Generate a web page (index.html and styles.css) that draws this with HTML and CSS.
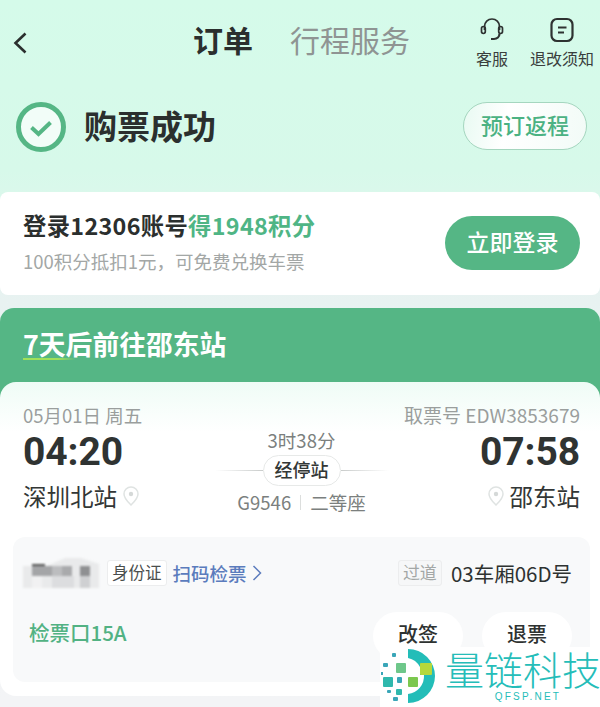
FILE: index.html
```html
<!DOCTYPE html>
<html lang="zh-CN">
<head>
<meta charset="utf-8">
<title>订单</title>
<link rel="stylesheet" href="styles.css">
</head>
<body>
<div class="page">
  <header class="nav">
    <svg class="back" width="16" height="24" viewBox="0 0 16 24"><path d="M13.5 2.5 3.5 12l10 9.5" fill="none" stroke="#2b2f2e" stroke-width="2.6"/></svg>
    <div class="tabs"><span class="tab-on">订单</span><span class="tab-off">行程服务</span></div>
    <div class="tools">
      <div class="tool tool-a">
        <svg width="24" height="24" viewBox="0 0 24 24" fill="none" stroke="#2e3231" stroke-width="1.7"><path d="M4.500 12V8.500a7.500 7.500 0 0 1 15 0V12"/><rect x="1.500" y="8.500" width="3.800" height="7" rx="1.900"/><rect x="18.700" y="8.500" width="3.800" height="7" rx="1.900"/><path d="M19.500 15.500c0 3.500-2.500 5.500-5.500 5.500h-3" stroke-width="2.200"/></svg>
        <span>客服</span>
      </div>
      <div class="tool tool-b">
        <svg width="24" height="26" viewBox="0 0 24 26" fill="none" stroke="#2e3231"><rect x="1.500" y="2" width="21" height="22" rx="5.500" stroke-width="2.200"/><path d="M8 10.500h8.500M8 15.500h6" stroke-width="2"/></svg>
        <span>退改须知</span>
      </div>
    </div>
  </header>

  <section class="status">
    <div class="status-main">
      <svg width="50" height="50" viewBox="0 0 50 50"><circle cx="25" cy="25" r="22.500" fill="#f2fdf8" stroke="#55b685" stroke-width="5"/><path d="M15.500 25.500l7 6.500 12-11.500" fill="none" stroke="#55b685" stroke-width="4"/></svg>
      <h1>购票成功</h1>
    </div>
    <div class="return-btn">预订返程</div>
  </section>

  <section class="login">
    <div>
      <div class="login-title">登录12306账号<em>得1948积分</em></div>
      <div class="login-sub">100积分抵扣1元，可免费兑换车票</div>
    </div>
    <div class="login-btn">立即登录</div>
  </section>

  <section class="trip">
    <div class="trip-head"><span>7天后前往邵东站</span></div>
    <div class="ticket">
      <div class="route">
        <div class="end">
          <div class="meta">05月01日 周五</div>
          <div class="time">04:20</div>
          <div class="station">深圳北站
            <svg class="pin" width="16" height="20" viewBox="0 0 16 20"><path d="M8 1a7 7 0 0 0-7 7c0 4.500 4.500 8.500 7 11 2.500-2.500 7-6.500 7-11a7 7 0 0 0-7-7z" fill="#fff" stroke="#dfe3e2" stroke-width="1.500"/><circle cx="8" cy="8" r="2.200" fill="#d5d9d8"/></svg>
          </div>
        </div>
        <div class="mid">
          <div class="duration">3时38分</div>
          <div class="stops"><i class="line line-l"></i><span class="pill">经停站</span><i class="line line-r"></i></div>
          <div class="train"><span>G9546</span><i class="bar"></i><span>二等座</span></div>
        </div>
        <div class="end end-right">
          <div class="meta">取票号 EDW3853679</div>
          <div class="time">07:58</div>
          <div class="station">
            <svg class="pin" width="16" height="20" viewBox="0 0 16 20"><path d="M8 1a7 7 0 0 0-7 7c0 4.500 4.500 8.500 7 11 2.500-2.500 7-6.500 7-11a7 7 0 0 0-7-7z" fill="#fff" stroke="#dfe3e2" stroke-width="1.500"/><circle cx="8" cy="8" r="2.200" fill="#d5d9d8"/></svg>
            邵东站</div>
        </div>
      </div>

      <div class="panel">
        <div class="row row-top">
          <div class="who">
            <svg class="mosaic" width="76" height="30" viewBox="0 0 76 30">
              <path d="M0 8h24l18-8h16l18 6v24H0z" fill="#e9eaeb"/>
              <rect x="9" y="6" width="13" height="2" fill="#555"/>
              <rect x="9" y="8" width="20" height="10" fill="#a4a5a7"/>
              <rect x="29" y="8" width="10" height="10" fill="#bcbdbf"/>
              <rect x="39" y="8" width="10" height="10" fill="#a9aaac"/>
              <rect x="57" y="8" width="10" height="10" fill="#8f9092"/>
              <rect x="29" y="18" width="22" height="12" fill="#dcdddf"/>
              <rect x="57" y="18" width="10" height="12" fill="#cfd0d2"/>
              <rect x="9" y="18" width="10" height="12" fill="#f1f1f2"/>
            </svg>
            <span class="tag">身份证</span>
            <span class="scan">扫码检票</span>
            <svg class="chev" width="10" height="18" viewBox="0 0 10 18"><path d="M1.500 2l7 7-7 7" fill="none" stroke="#5b7cbd" stroke-width="1.500"/></svg>
          </div>
          <div class="seat"><span class="tag tag-light">过道</span><span>03车厢06D号</span></div>
        </div>
        <div class="row row-bottom">
          <div class="gate">检票口15A</div>
          <div class="actions"><div class="action">改签</div><div class="action">退票</div></div>
        </div>
      </div>
    </div>
  </section>

  <div class="mark">
    <svg width="56" height="60" viewBox="0 0 56 60">
      <path d="M28 2a27 27 0 0 1 0 54v-9a18 18 0 0 0 16-19h-4v-8a18 18 0 0 0-12-9z" fill="#23bdb8"/>
      <rect x="12" y="6" width="4" height="4" rx="1" fill="#3aa6b8"/>
      <rect x="3" y="16" width="5" height="4" rx="1" fill="#3aa6b8"/>
      <rect x="1" y="25" width="2" height="3" fill="#3aa6b8"/>
      <rect x="16" y="16" width="10" height="10" rx="1" fill="#6ec78a"/>
      <rect x="40" y="16" width="12" height="12" rx="1" fill="#b4d83c"/>
      <rect x="3" y="30" width="10" height="10" rx="1" fill="#2fb8ad"/>
      <rect x="17" y="30" width="5" height="6" rx="1" fill="#3aa6b8"/>
      <rect x="28" y="30" width="10" height="10" rx="1" fill="#7bc84f"/>
      <rect x="7" y="43" width="4" height="3" rx="1" fill="#3aa6b8"/>
      <rect x="16" y="42" width="6" height="6" rx="1" fill="#2fb8ad"/>
      <rect x="13" y="50" width="5" height="4" rx="1" fill="#3aa6b8"/>
    </svg>
    <div class="mark-text">
      <div class="mark-name">量链科技</div>
      <div class="mark-url">QFSP.NET</div>
    </div>
  </div>
</div>
</body>
</html>
```

FILE: styles.css
```css
* { box-sizing: border-box; }
html, body { margin: 0; padding: 0; }
body {
  font-family: "Noto Sans CJK SC", "Noto Sans", sans-serif;
  color: #2e3231;
}
.page {
  position: relative;
  width: 600px;
  height: 707px;
  overflow: hidden;
  background: linear-gradient(#d5fbea 0, #d7f9ea 170px, #e8f2f1 300px, #f3f4f6 700px);
}
.nav {
  position: relative;
  height: 83px;
  padding: 0 6px 0 12px;
  display: flex;
  align-items: flex-start;
}
.back { margin-top: 31px; }
.tabs {
  margin: 17px 0 0 165px;
  display: flex;
  gap: 37px;
  font-size: 30px;
  line-height: 44px;
}
.tab-on { font-weight: 700; color: #2b2f2e; }
.tab-off { color: #8f9493; }
.tools {
  margin-left: auto;
  display: flex;
  gap: 22px;
  padding-top: 17px;
}
.tool {
  display: flex;
  flex-direction: column;
  align-items: center;
  font-size: 16px;
  line-height: 20px;
  color: #3a3e3d;
}
.tool svg { display: block; height: 26px; }
.tool span { margin-top: 5px; }
.status {
  height: 109px;
  padding: 19px 13px 0 16px;
  display: flex;
  justify-content: space-between;
  align-items: flex-start;
}
.status-main { display: flex; align-items: flex-start; gap: 18px; }
.status-main svg { display: block; }
h1 {
  margin: -2px 0 0;
  font-size: 33px;
  line-height: 50px;
  font-weight: 700;
  color: #2b2f2e;
}
.return-btn {
  width: 124px;
  height: 48px;
  padding-bottom: 5px;
  border: 1px solid #a5d6bf;
  border-radius: 24px;
  background: linear-gradient(100deg, #e8faf2, #ffffff 35%, #f2fbf7);
  color: #4bb283;
  font-size: 22px;
  font-weight: 500;
  display: flex;
  align-items: center;
  justify-content: center;
}
.login {
  height: 103px;
  background: #fff;
  border-radius: 8px;
  padding: 16px 20px 0 23px;
  display: flex;
  justify-content: space-between;
  align-items: flex-start;
}
.login-title {
  font-size: 23.300px;
  line-height: 34px;
  font-weight: 700;
  letter-spacing: 0.35px;
  color: #2b2f2e;
}
.login-title em { font-style: normal; color: #4fb585; }
.login-sub {
  margin-top: 7px;
  font-size: 18.500px;
  line-height: 24px;
  color: #a3a7a6;
}
.login-btn {
  margin-top: 8px;
  width: 135px;
  height: 54px;
  padding-bottom: 5px;
  border-radius: 27px;
  background: #55b685;
  color: #fff;
  font-size: 23px;
  font-weight: 500;
  display: flex;
  align-items: center;
  justify-content: center;
}
.trip {
  margin-top: 13px;
  background: linear-gradient(#55b685 0, #55b685 100px, transparent 100px);
  border-radius: 14px 14px 0 0;
}
.trip-head {
  height: 74px;
  padding: 15px 0 0 23px;
  color: #fff;
  font-size: 26.800px;
  line-height: 42px;
  font-weight: 700;
}
.trip-head span {
  display: inline-block;
  background: linear-gradient(90deg, #9fe05a, #9fe05a 50%, transparent 75%) no-repeat 0 35px / 70px 2px;
}
.ticket {
  height: 314px;
  padding: 21px 10px 14px 13px;
  background: linear-gradient(#effcf6 0, #ffffff 50px);
  border-radius: 16px;
}
.route {
  height: 134px;
  display: flex;
  justify-content: space-between;
  padding: 0 10px;
}
.end { width: 190px; }
.end-right { text-align: right; }
.meta {
  font-size: 18.500px;
  line-height: 24px;
  color: #9a9e9d;
}
.end-right .meta { font-size: 19px; }
.time {
  margin-top: 4px;
  font-family: "Roboto", "Noto Sans", sans-serif;
  font-size: 39px;
  line-height: 42px;
  font-weight: 700;
  letter-spacing: -0.1px;
  color: #2f3332;
}
.station {
  margin-top: 5px;
  font-size: 23.500px;
  line-height: 36px;
  color: #333736;
  display: flex;
  align-items: center;
  gap: 6px;
}
.end-right .station { justify-content: flex-end; }
.pin { display: block; }
.mid {
  width: 180px;
  padding-top: 25px;
  text-align: center;
  color: #7b7f7e;
}
.duration { font-size: 18.500px; line-height: 24px; }
.stops {
  margin-top: 3px;
  display: flex;
  align-items: center;
  justify-content: center;
}
.line { width: 48px; height: 1px; }
.line-l { background: linear-gradient(90deg, transparent, #c9cccb); }
.line-r { background: linear-gradient(90deg, #c9cccb, transparent); }
.pill {
  width: 78px;
  height: 31px;
  border: 1px solid #e7e9e8;
  border-radius: 16px;
  background: #fff;
  color: #333736;
  font-size: 18px;
  font-weight: 500;
  line-height: 27px;
}
.train {
  margin-top: 3px;
  font-size: 18.500px;
  line-height: 26px;
  display: flex;
  justify-content: center;
  align-items: center;
  gap: 9px;
}
.bar { width: 1px; height: 15px; background: #dcdedd; }
.panel {
  height: 145px;
  background: #f8f9fa;
  border-radius: 12px;
  padding: 18px 18px 0 10px;
}
.row { display: flex; justify-content: space-between; align-items: center; }
.row-top { height: 36px; }
.row-bottom { height: 48px; margin-top: 21px; padding-left: 6px; }
.who { display: flex; align-items: center; }
.mosaic { display: block; filter: blur(1px); margin-right: 8px; }
.tag {
  height: 26px;
  padding: 0 4px;
  border: 1px solid #ecedee;
  border-radius: 3px;
  background: #fff;
  font-size: 16.500px;
  line-height: 22px;
  color: #4a4e4d;
}
.tag-light { color: #a3a7a6; background: #f6f7f8; font-size: 17px; }
.scan {
  margin: 0 5px 0 6px;
  font-size: 18.500px;
  font-weight: 500;
  color: #5b7cbd;
}
.seat { display: flex; align-items: center; gap: 9px; font-size: 20.500px; color: #2e3231; }
.gate { padding-bottom: 8px; font-size: 20.500px; font-weight: 500; color: #52b283; }
.actions { display: flex; gap: 19px; }
.action {
  width: 90px;
  height: 48px;
  padding-bottom: 4px;
  border-radius: 24px;
  background: #fff;
  font-size: 20px;
  line-height: 20px;
  font-weight: 500;
  display: flex;
  align-items: center;
  justify-content: center;
  color: #2e3231;
}
.mark {
  position: absolute;
  left: 380px;
  top: 647px;
  width: 220px;
  height: 60px;
  background: #fff;
  display: flex;
  align-items: flex-start;
}
.mark svg { display: block; flex: none; }
.mark-text { margin-left: 9px; width: 156px; text-align: center; }
.mark-name {
  margin-top: 2px;
  font-size: 39px;
  line-height: 39px;
  font-weight: 300;
  color: #25bdb9;
  white-space: nowrap;
}
.mark-url {
  margin-top: 3px;
  padding-left: 10px;
  font-family: "Liberation Sans", sans-serif;
  font-size: 10px;
  line-height: 12px;
  letter-spacing: 2.200px;
  color: #25bdb9;
  white-space: nowrap;
}
```
